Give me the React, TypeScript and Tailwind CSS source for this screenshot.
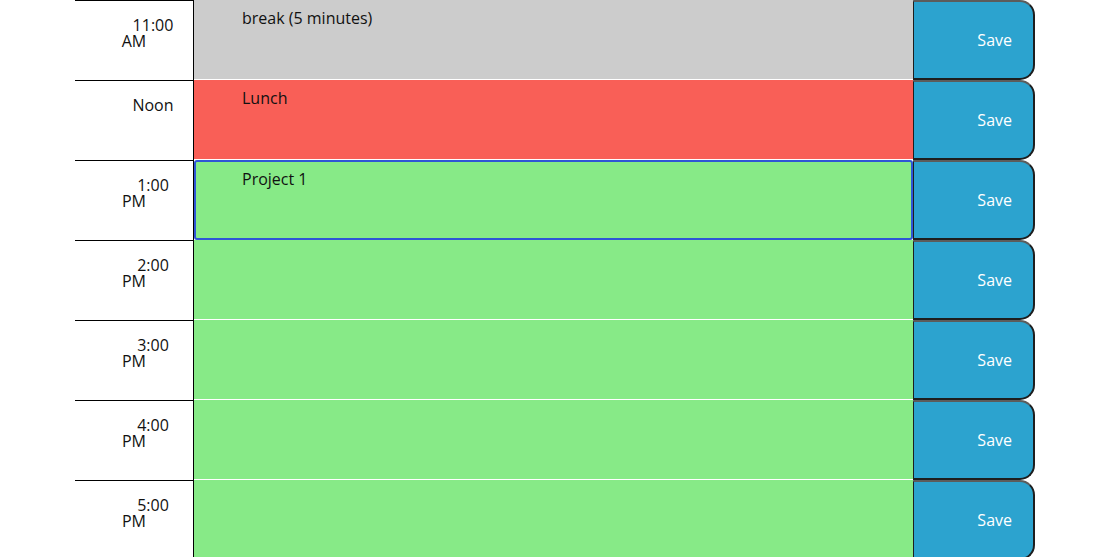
const rows = [
  { top: "11:00", bottom: "AM", text: "break (5 minutes)", tone: "past" },
  { top: "Noon", bottom: "", text: "Lunch", tone: "present" },
  { top: "1:00", bottom: "PM", text: "Project 1", tone: "future", focused: true },
  { top: "2:00", bottom: "PM", text: "", tone: "future" },
  { top: "3:00", bottom: "PM", text: "", tone: "future" },
  { top: "4:00", bottom: "PM", text: "", tone: "future" },
  { top: "5:00", bottom: "PM", text: "", tone: "future" },
];

const toneClass: Record<string, string> = {
  past: "bg-[#cccccc]",
  present: "bg-[#f95f57]",
  future: "bg-[#87ea87]",
};

const App = () => {
  return (
    <div className="h-[557px] overflow-hidden bg-white font-['Open_Sans',sans-serif] text-base text-[#111]">
      <div className="ml-[75px] w-[960px]">
        {rows.map((row) => (
          <div key={row.top} className="flex h-20">
            <div className="w-[119px] shrink-0 border-t border-r border-black pt-4 text-center leading-4">
              <div className="pl-[38px]">{row.top}</div>
              {row.bottom ? <div>{row.bottom}</div> : null}
            </div>
            <textarea
              readOnly
              value={row.text}
              className={
                row.focused
                  ? `min-w-0 flex-1 resize-none rounded-[3px] border-2 border-[#2f56d6] pt-[5px] pl-[46px] leading-6 outline-none ${toneClass[row.tone]}`
                  : `min-w-0 flex-1 resize-none border-b border-white pt-[6px] pl-[48px] leading-6 outline-none ${toneClass[row.tone]}`
              }
            />
            <button className="flex w-[122px] shrink-0 items-center justify-end rounded-r-[15px] border-t-2 border-r-2 border-b-2 border-l border-t-[#5c5c5c] border-r-[#1e1e1e] border-b-[#1e1e1e] border-l-[#1e1e1e] bg-[#2ca3cf] pr-[21px] text-white">
              Save
            </button>
          </div>
        ))}
      </div>
    </div>
  );
};

export default App;
